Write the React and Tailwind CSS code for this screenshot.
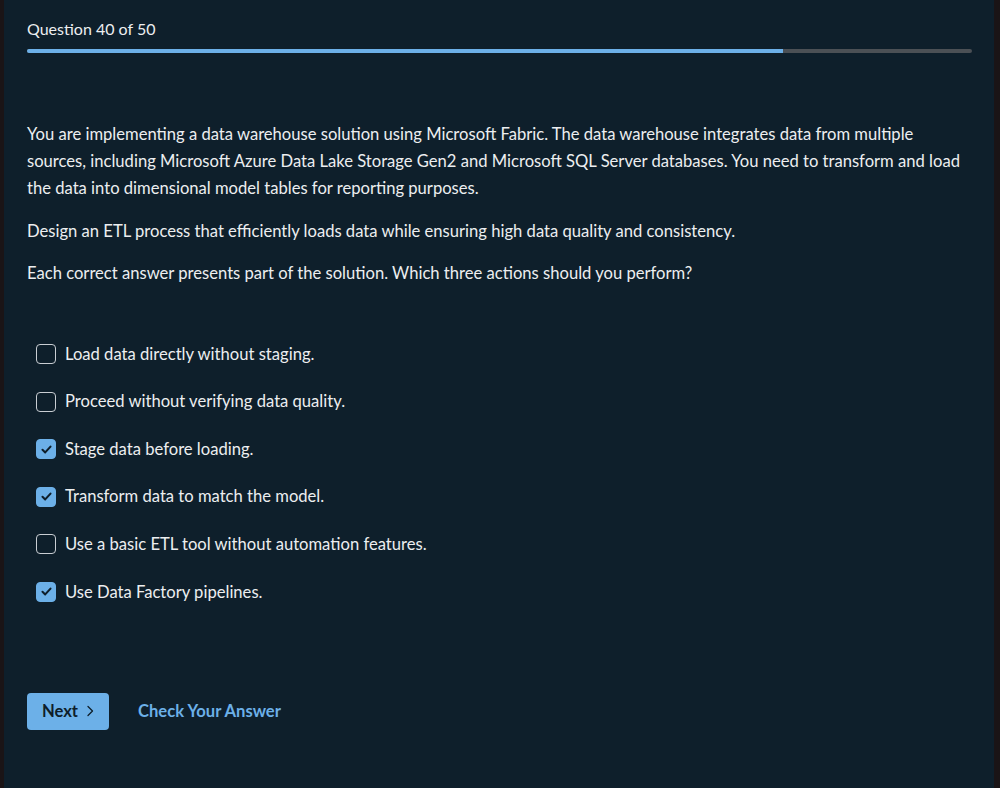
import { useState } from "react";

const options = [
  { text: "Load data directly without staging.", checked: false },
  { text: "Proceed without verifying data quality.", checked: false },
  { text: "Stage data before loading.", checked: true },
  { text: "Transform data to match the model.", checked: true },
  { text: "Use a basic ETL tool without automation features.", checked: false },
  { text: "Use Data Factory pipelines.", checked: true },
];

const Checkbox = ({ checked }) => (
  <span
    className={
      checked
        ? "flex items-center justify-center w-5 h-5 rounded-[4px] bg-[#6cb0e8] border border-[#6cb0e8]"
        : "flex items-center justify-center w-5 h-5 rounded-[4px] border border-[#c9ced3]"
    }
  >
    {checked && (
      <svg width="13" height="13" viewBox="0 0 12 12" fill="none">
        <path d="M2.3 6.3 L4.8 8.7 L9.7 3.3" stroke="#0e1e2a" strokeWidth="1.9" strokeLinecap="round" strokeLinejoin="round" />
      </svg>
    )}
  </span>
);

const App = () => {
  const [answers, setAnswers] = useState(options);

  const toggle = (i) => {
    setAnswers(answers.map((a, j) => (j === i ? { ...a, checked: !a.checked } : a)));
  };

  return (
    <div className="min-h-screen flex bg-[#1a1416]" style={{ fontFamily: "Lato, 'Noto Sans', sans-serif" }}>
      <div className="w-[4px] shrink-0" />
      <main className="flex-1 bg-[#0e1f2b] text-[#eceef0] pl-[23px] pr-[22px] pt-[18px] pb-10">
        <p className="text-[16px] leading-[22px]">Question 40 of 50</p>
        <div className="mt-[9px] h-[4px] rounded-full bg-[#4b5055] overflow-hidden">
          <div className="h-full w-[80%] bg-[#6cb0e8]" />
        </div>

        <div className="mt-[68px] text-[16.6px] leading-[27px]">
          <p className="pr-[8px]">
            You are implementing a data warehouse solution using Microsoft Fabric. The data warehouse integrates data from
            multiple sources, including Microsoft Azure Data Lake Storage Gen2 and Microsoft SQL Server databases. You need to
            transform and load the data into dimensional model tables for reporting purposes.
          </p>
          <p className="mt-[16px]">
            Design an ETL process that efficiently loads data while ensuring high data quality and consistency.
          </p>
          <p className="mt-[15px]">
            Each correct answer presents part of the solution. Which three actions should you perform?
          </p>
        </div>

        <ul className="mt-[57px] ml-[9px] flex flex-col gap-[27.6px]">
          {answers.map((a, i) => (
            <li key={i} className="flex items-center gap-[9px] h-[20px] cursor-pointer" onClick={() => toggle(i)}>
              <Checkbox checked={a.checked} />
              <span className="text-[16.6px]">{a.text}</span>
            </li>
          ))}
        </ul>

        <div className="mt-[91px] flex items-center gap-[29px]">
          <button className="flex items-center gap-[8px] h-[37px] w-[82px] justify-center rounded-[4px] bg-[#6cb0e8] text-[#0e1e2a] text-[16.6px] font-bold">
            Next
            <svg width="8" height="12" viewBox="0 0 8 12" fill="none">
              <path d="M2 1.5 L6.5 6 L2 10.5" stroke="#0e1e2a" strokeWidth="1.3" strokeLinecap="round" strokeLinejoin="round" />
            </svg>
          </button>
          <button className="text-[16.6px] font-bold text-[#6cb0e8]">Check Your Answer</button>
        </div>
      </main>
      <div className="w-[6px] shrink-0" />
    </div>
  );
};

export default App;
